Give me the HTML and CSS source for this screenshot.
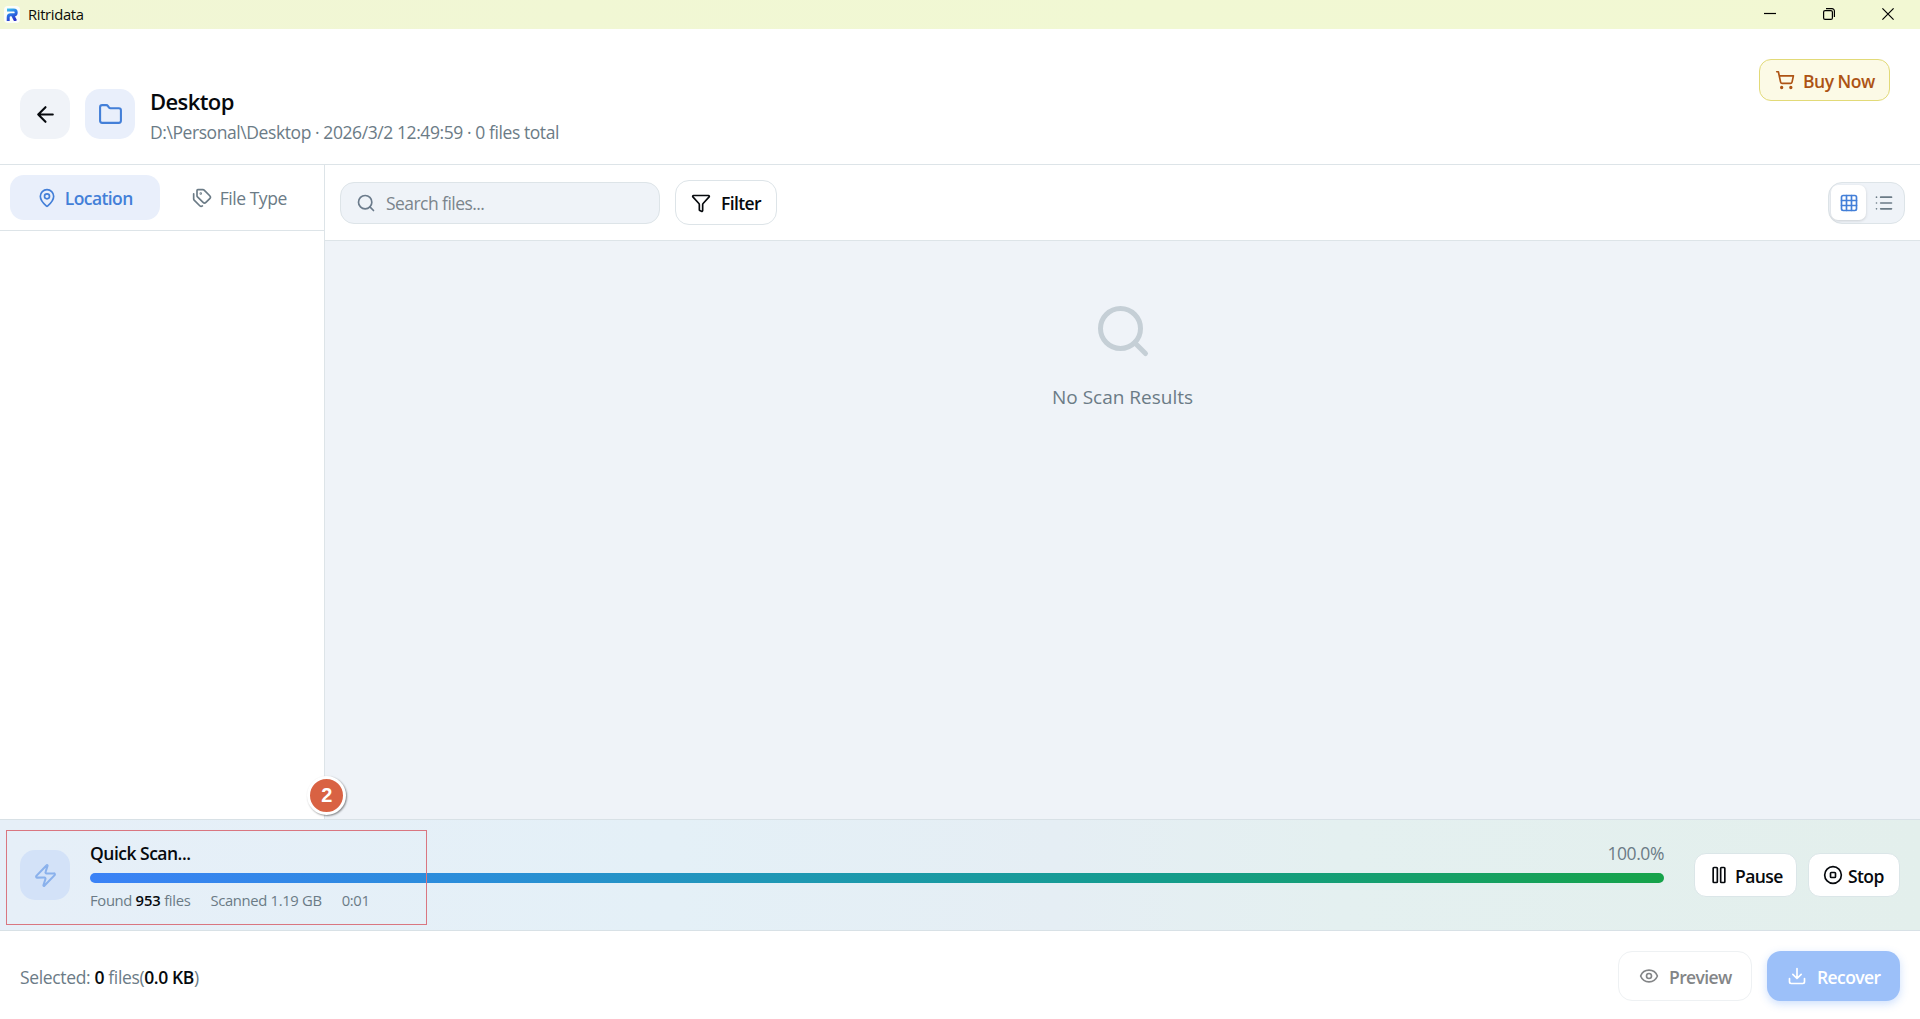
FILE: index.html
```html
<!DOCTYPE html>
<html lang="en">
<head>
    <meta charset="UTF-8">
    <meta name="viewport" content="width=device-width, initial-scale=1.0">
    <title>Ritridata</title>
    <link rel="stylesheet" href="styles.css">
</head>
<body>
    <div class="titlebar">
        <div class="app-logo">
            <svg width="12" height="13" viewBox="0 0 12 13">
                <defs>
                    <linearGradient id="logo" gradientUnits="userSpaceOnUse" x1="1" y1="0" x2="7" y2="13">
                        <stop offset="0" stop-color="#43d0ee"/>
                        <stop offset="0.45" stop-color="#2a7be8"/>
                        <stop offset="1" stop-color="#2c30c8"/>
                    </linearGradient>
                </defs>
                <path stroke="url(#logo)" d="M1 2h6.8a2.3 2.3 0 0 1 0 4.8H4.6a2.4 2.4 0 0 0-2.4 2.4V13M6.6 7l3 6"/>
            </svg>
        </div>
        <span class="app-name">Ritridata</span>
        <div class="window-buttons">
            <svg width="12" height="12" viewBox="0 0 12 12"><path d="M0 5.5h12"/></svg>
            <svg width="12" height="12" viewBox="0 0 12 12"><rect x=".6" y="2.6" width="8.8" height="8.8" rx="1.5"/><path d="M3 .6h6a2.4 2.4 0 0 1 2.4 2.4v6"/></svg>
            <svg width="12" height="12" viewBox="0 0 12 12"><path d="M.4.4l11.2 11.2M11.6.4L.4 11.6"/></svg>
        </div>
    </div>

    <header class="header">
        <button class="square back">
            <svg class="icon-lg" viewBox="0 0 24 24"><path d="m12 19-7-7 7-7M19 12H5"/></svg>
        </button>
        <div class="square folder">
            <svg class="icon-lg" viewBox="0 0 24 24"><path d="M20 20a2 2 0 0 0 2-2V8a2 2 0 0 0-2-2h-7.9a2 2 0 0 1-1.69-.9L9.6 3.9A2 2 0 0 0 7.93 3H4a2 2 0 0 0-2 2v13a2 2 0 0 0 2 2Z"/></svg>
        </div>
        <div class="heading">
            <h1>Desktop</h1>
            <p>D:\Personal\Desktop · 2026/3/2 12:49:59 · 0 files total</p>
        </div>
        <button class="buy">
            <svg class="icon" viewBox="0 0 24 24"><circle cx="8" cy="21" r="1"/><circle cx="19" cy="21" r="1"/><path d="M2.05 2.05h2l2.66 12.42a2 2 0 0 0 2 1.58h9.78a2 2 0 0 0 1.95-1.57l1.65-7.43H5.12"/></svg>
            <span>Buy Now</span>
        </button>
    </header>

    <main class="main">
        <aside class="sidebar">
            <div class="tabs">
                <button class="tab active">
                    <svg class="icon" viewBox="0 0 24 24"><path d="M20 10c0 5-5.5 10.2-7.4 11.8a1 1 0 0 1-1.2 0C9.5 20.2 4 15 4 10a8 8 0 0 1 16 0"/><circle cx="12" cy="10" r="3"/></svg>
                    <span>Location</span>
                </button>
                <button class="tab">
                    <svg class="icon" viewBox="0 0 24 24"><path d="M13.17 2a2 2 0 0 1 1.42.59l6.7 6.7a2.43 2.43 0 0 1 0 3.42l-4.58 4.58a2.43 2.43 0 0 1-3.42 0l-6.7-6.7A2 2 0 0 1 6 9.17V3a1 1 0 0 1 1-1z"/><path d="M2 7v6.17a2 2 0 0 0 .59 1.42l6.7 6.7a2.43 2.43 0 0 0 3.19.2"/><circle cx="10.5" cy="6.5" r=".5"/></svg>
                    <span>File Type</span>
                </button>
            </div>
        </aside>
        <section class="content">
            <div class="toolbar">
                <div class="search">
                    <svg class="icon" viewBox="0 0 24 24"><circle cx="11" cy="11" r="8"/><path d="m21 21-4.3-4.3"/></svg>
                    <span>Search files...</span>
                </div>
                <button class="filter">
                    <svg class="icon" viewBox="0 0 24 24"><path d="M10 20a1 1 0 0 0 .55.9l2 1A1 1 0 0 0 14 21v-7a2 2 0 0 1 .52-1.34L21.74 4.67A1 1 0 0 0 21 3H3a1 1 0 0 0-.74 1.67l7.22 7.99A2 2 0 0 1 10 14z"/></svg>
                    <span>Filter</span>
                </button>
                <div class="views">
                    <div class="view on">
                        <svg class="icon" viewBox="0 0 24 24"><rect x="3" y="3" width="18" height="18" rx="2"/><path d="M3 9h18M3 15h18M9 3v18M15 3v18"/></svg>
                    </div>
                    <div class="view">
                        <svg class="icon" viewBox="0 0 24 24"><path d="M3 5h.01M3 12h.01M3 19h.01M8 5h13M8 12h13M8 19h13"/></svg>
                    </div>
                </div>
            </div>
            <div class="empty">
                <svg width="60" height="60" viewBox="0 0 24 24"><circle cx="11" cy="11" r="8"/><path d="m21 21-4.3-4.3"/></svg>
                <p>No Scan Results</p>
            </div>
        </section>
    </main>

    <section class="scan">
        <div class="square bolt">
            <svg class="icon-lg" viewBox="0 0 24 24"><path d="M4 14a1 1 0 0 1-.78-1.63l9.9-10.2a.5.5 0 0 1 .86.46l-1.92 6.02A1 1 0 0 0 13 10h7a1 1 0 0 1 .78 1.63l-9.9 10.2a.5.5 0 0 1-.86-.46l1.92-6.02A1 1 0 0 0 11 14z"/></svg>
        </div>
        <div class="progress">
            <div class="progress-top">
                <span class="scan-title">Quick Scan...</span>
                <span class="percent">100.0%</span>
            </div>
            <div class="bar"></div>
            <div class="stats">
                <span>Found <b>953</b> files</span>
                <span>Scanned 1.19 GB</span>
                <span>0:01</span>
            </div>
        </div>
        <div class="scan-buttons">
            <button class="pause">
                <svg class="icon" viewBox="0 0 24 24"><rect x="14" y="3" width="5" height="18" rx="1"/><rect x="5" y="3" width="5" height="18" rx="1"/></svg>
                <span>Pause</span>
            </button>
            <button class="stop">
                <svg class="icon" viewBox="0 0 24 24"><circle cx="12" cy="12" r="10"/><rect x="9" y="9" width="6" height="6" rx="1"/></svg>
                <span>Stop</span>
            </button>
        </div>
        <div class="highlight"></div>
        <div class="step">2</div>
    </section>

    <footer class="footer">
        <p class="selected">Selected: <b>0</b> files(<b>0.0 KB</b>)</p>
        <button class="preview">
            <svg class="icon" viewBox="0 0 24 24"><path d="M2.06 12.35a1 1 0 0 1 0-.7 10.75 10.75 0 0 1 19.88 0 1 1 0 0 1 0 .7 10.75 10.75 0 0 1-19.88 0"/><circle cx="12" cy="12" r="3"/></svg>
            <span>Preview</span>
        </button>
        <button class="recover">
            <svg class="icon" viewBox="0 0 24 24"><path d="M12 15V3M21 15v4a2 2 0 0 1-2 2H5a2 2 0 0 1-2-2v-4M7 10l5 5 5-5"/></svg>
            <span>Recover</span>
        </button>
    </footer>
</body>
</html>
```
FILE: styles.css
```css
* {
    box-sizing: border-box;
}
body {
    margin: 0;
    height: 1019px;
    display: flex;
    flex-direction: column;
    overflow: hidden;
    font-family: "Open Sans", "Noto Sans", sans-serif;
    font-size: 17.5px;
    line-height: 24px;
    letter-spacing: -0.42px;
    color: #6b7b86;
    background: #fff;
}
h1, p {
    margin: 0;
    white-space: nowrap;
}
b {
    font-weight: 600;
    color: #06090d;
    letter-spacing: -0.4px;
}
button {
    display: flex;
    align-items: center;
    padding: 0;
    border: 1px solid transparent;
    background: #fff;
    font: inherit;
    font-weight: 600;
    letter-spacing: -0.6px;
    color: #06090d;
    white-space: nowrap;
}
button span {
    padding-top: 1px;
}
svg {
    display: block;
    flex: none;
    fill: none;
    stroke: currentColor;
    stroke-width: 2;
    stroke-linecap: round;
    stroke-linejoin: round;
}
.icon {
    width: 20px;
    height: 20px;
}
.icon-lg {
    width: 25px;
    height: 25px;
}
.square {
    width: 50px;
    height: 50px;
    flex: none;
    display: flex;
    align-items: center;
    justify-content: center;
    border: none;
    border-radius: 15px;
}

/* title bar */
.titlebar {
    height: 29px;
    flex: none;
    display: flex;
    align-items: center;
    padding-left: 4px;
    background: linear-gradient(90deg, #f1f6d5, #f1f8d3 60%, #f2f8d3);
}
.app-logo {
    width: 16px;
    height: 17px;
    display: flex;
    align-items: center;
    justify-content: center;
    border-radius: 4px;
    background: #fbfdfa;
}
.app-logo svg {
    stroke-width: 3;
    stroke-linecap: butt;
}
.app-name {
    margin: -2px 0 0 8px;
    font-size: 14.8px;
    letter-spacing: -0.35px;
    color: #0b0d08;
}
.window-buttons {
    display: flex;
    gap: 47px;
    margin: -1px 0 0 auto;
    padding-right: 26px;
    color: #000;
}
.window-buttons svg {
    stroke-width: 1.2;
    stroke-linecap: butt;
}

/* header */
.header {
    height: 136px;
    flex: none;
    display: flex;
    align-items: flex-start;
    padding: 60px 30px 0 20px;
    border-bottom: 1px solid #dde4e8;
}
.back {
    background: #f0f3f8;
}
.folder {
    margin-left: 15px;
    background: #e9effb;
    color: #437fd8;
}
.heading {
    margin: -1px 0 0 15px;
}
.heading h1 {
    margin-bottom: 5px;
    font-size: 22px;
    font-weight: 600;
    line-height: 27px;
    letter-spacing: -0.6px;
    color: #06090d;
}
.buy {
    width: 131px;
    height: 42px;
    margin: -30px 0 0 auto;
    padding-left: 15px;
    gap: 8px;
    border-color: #e2da78;
    border-radius: 12px;
    background: #fcfae6;
    color: #ad5314;
    letter-spacing: -0.5px;
}
.buy span {
    padding-top: 2px;
}

/* main area */
.main {
    height: 654px;
    flex: none;
    display: flex;
}
.sidebar {
    width: 325px;
    border-right: 1px solid #dde4e8;
}
.tabs {
    height: 66px;
    display: flex;
    gap: 5px;
    padding: 10px;
    border-bottom: 1px solid #dde4e8;
}
.tab {
    width: 150px;
    height: 45px;
    justify-content: center;
    gap: 8px;
    border: none;
    border-radius: 14px;
    color: #6b7b86;
    font-weight: 400;
    letter-spacing: -0.45px;
}
.tab.active {
    background: #e9effb;
    color: #437fd8;
    font-weight: 600;
    letter-spacing: -0.6px;
}
.content {
    flex: 1;
    display: flex;
    flex-direction: column;
    background: #eff3f8;
}
.toolbar {
    height: 76px;
    display: flex;
    align-items: center;
    padding: 0 15px;
    border-bottom: 1px solid #dde4e8;
    background: #fff;
}
.search {
    width: 320px;
    height: 42px;
    display: flex;
    align-items: center;
    gap: 10px;
    padding-left: 15px;
    border: 1px solid #dde4e8;
    border-radius: 14px;
    background: #eff3f8;
    color: #7b858c;
    letter-spacing: -0.55px;
}
.search .icon {
    color: #6b7b8b;
}
.search span {
    padding-top: 1px;
}
.filter {
    width: 102px;
    height: 45px;
    margin-left: 15px;
    padding-left: 15px;
    gap: 10px;
    border-color: #dde4e8;
    border-radius: 14px;
}
.views {
    width: 77px;
    height: 42px;
    display: flex;
    align-items: center;
    margin-left: auto;
    padding-left: 2px;
    border: 1px solid #dde4e8;
    border-radius: 14px;
    background: #eff3f8;
}
.view {
    width: 35px;
    height: 35px;
    display: flex;
    align-items: center;
    justify-content: center;
}
.view.on {
    border-radius: 7px;
    background: #fff;
    color: #437fd8;
    box-shadow: 0 1px 3px rgba(0, 0, 0, 0.15);
}
.empty {
    display: flex;
    flex-direction: column;
    align-items: center;
    padding-top: 60px;
    font-size: 19px;
    letter-spacing: 0;
}
.empty svg {
    margin-bottom: 24px;
    color: #c5cfd6;
}

/* scan progress */
.scan {
    position: relative;
    height: 112px;
    flex: none;
    display: flex;
    align-items: center;
    padding: 0 20px;
    border-top: 1px solid #d8e1e6;
    border-bottom: 1px solid #d8e1e6;
    background: linear-gradient(90deg, #e6eff8, #e4f0f7 35%, #e5eef4 55%, #e4f0f0 70%, #e3efec);
}
.bolt {
    background: #d3e2f8;
    color: #8ab1ec;
}
.progress {
    width: 1574px;
    margin-left: 20px;
    padding-top: 3px;
}
.progress-top {
    display: flex;
    justify-content: space-between;
    margin-bottom: 8px;
}
.scan-title {
    font-weight: 600;
    letter-spacing: -0.5px;
    color: #06090d;
}
.bar {
    height: 10px;
    border-radius: 5px;
    background: linear-gradient(90deg, #3b82f6, #2a8ed8 25%, #1e98b2 45%, #149c8c 68%, #16a34a);
}
.stats {
    display: flex;
    gap: 20px;
    margin-top: 5px;
    font-size: 14.8px;
    line-height: 24px;
    letter-spacing: -0.33px;
}
.stats b {
    letter-spacing: -0.1px;
}
.scan-buttons {
    display: flex;
    gap: 11px;
    margin: 0 0 0 auto;
}
.pause, .stop {
    height: 44px;
    border-color: #dbe6e8;
    border-radius: 12px;
}
.pause svg, .stop svg {
    margin-top: -1px;
}
.pause span, .stop span {
    padding-top: 2px;
}
.pause {
    width: 103px;
    padding-left: 14px;
    gap: 6px;
}
.stop {
    width: 92px;
    padding-left: 14px;
    gap: 5px;
}

/* callout drawn over the scan panel */
.highlight {
    position: absolute;
    left: 6px;
    top: 10px;
    width: 421px;
    height: 95px;
    border: 1.5px solid #d97680;
}
.step {
    position: absolute;
    left: 307px;
    top: -44px;
    width: 39px;
    height: 39px;
    border: 3px solid #fff;
    border-radius: 50%;
    background: #d96243;
    box-shadow: 1px 1px 2px rgba(0, 0, 0, 0.45);
    color: #fff;
    font-family: "Liberation Sans", Arial, sans-serif;
    font-size: 20px;
    font-weight: 700;
    line-height: 33px;
    text-align: center;
}

/* footer */
.footer {
    flex: 1;
    display: flex;
    align-items: center;
    gap: 15px;
    padding: 2px 20px 0;
}
.selected {
    margin-right: auto;
    padding-top: 2px;
    letter-spacing: -0.35px;
}
.preview, .recover {
    width: 133px;
    height: 50px;
    border-radius: 14px;
}
.preview span, .recover span {
    padding-top: 2px;
}
.preview {
    width: 134px;
    padding-left: 20px;
    gap: 10px;
    border-color: #eef1f3;
    color: #838587;
}
.recover {
    padding-left: 20px;
    gap: 10px;
    border: none;
    background: #9cc0f9;
    color: #fff;
    box-shadow: 0 3px 8px rgba(59, 130, 246, 0.25);
}
```
